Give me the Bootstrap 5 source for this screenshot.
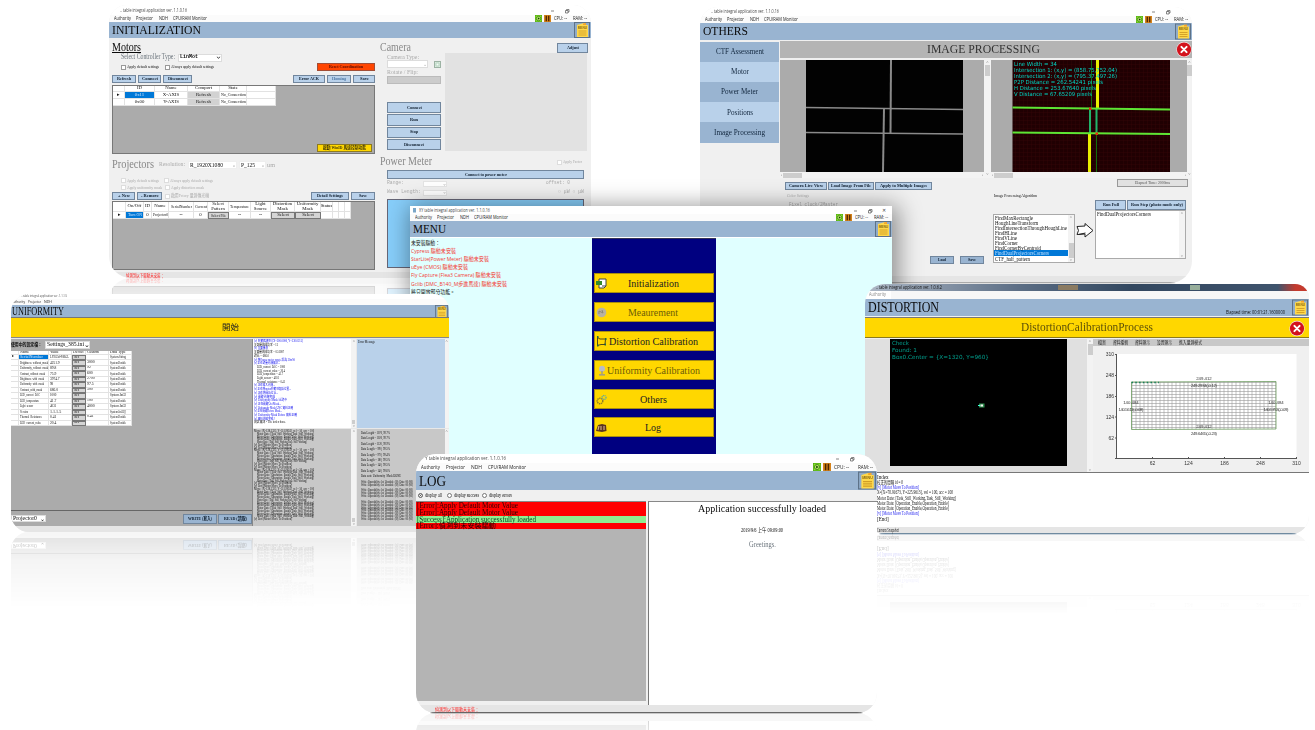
<!DOCTYPE html>
<html lang="zh-Hant">
<head>
<meta charset="utf-8">
<title>XY table integral application</title>
<link rel="stylesheet" href="https://cdn.jsdelivr.net/npm/bootstrap@5.3.0/dist/css/bootstrap.min.css">
<style>
body{width:1315px;height:730px;overflow:hidden;background:#fff;position:relative;color:#0a0a0a;font:5px/1 "Liberation Serif","Noto Sans CJK TC",serif}
.desk{width:1315px;height:730px;position:relative;overflow:hidden}
.win{position:absolute;overflow:hidden;display:flex;flex-direction:column;background:#f0f0f0;
 -webkit-box-reflect:below 0 linear-gradient(transparent 68%,rgba(0,0,0,.12) 88%,rgba(0,0,0,.36))}
.w-init{left:109px;top:5px;width:482px;height:273px;border-radius:18px 18px 0 22px}
.w-oth{left:700px;top:7px;width:492px;height:276px;border-radius:18px 18px 22px 0}
.w-menu{left:410px;top:206px;width:482px;height:272px;box-shadow:3px 3px 22px 3px rgba(0,0,0,.42);-webkit-box-reflect:unset}
.w-uni{left:11px;top:294px;width:438px;height:238px;border-radius:18px 16px 0 18px}
.w-dis{left:865px;top:284px;width:444px;height:250px;border-radius:20px 14px 18px 20px}
.w-log{left:416px;top:454px;width:461px;height:259px;border-radius:20px}
.f{display:flex;align-items:center;white-space:nowrap}
.g{display:grid;white-space:nowrap}
.fit{display:inline-block;white-space:nowrap;line-height:1.1}
.fit>span{display:inline-block;transform-origin:0 50%}
u.fit{text-decoration:none}u.fit>span{text-decoration:underline;text-decoration-thickness:1px}
.ui{font-family:"Open Sans","Noto Sans CJK TC",sans-serif}
.mono{font:5px "Liberation Mono",monospace}
.ttl{height:10px;background:#fff;padding:2px 21px 0 11px;font-size:5.4px;color:#444;flex:none}
.mnu{height:7px;background:#fbfbfb;padding:0 4px 0 4.5px;font-size:5px;color:#222;flex:none}
.hd{height:16px;background:#99b4d1;padding:0 1px 0 3px;font-size:13.5px;color:#0a0a0a;flex:none;justify-content:space-between}
.hd svg{height:100%;width:16px;flex:none}
.s1{margin-left:1px}.s2{margin-left:2px}.s3{margin-left:3px}.s5{margin-left:5px}.s6{margin-left:6px}.s9{margin-left:9px}.s19{margin-left:19px}
.e6{margin-right:6px}.e14{margin-right:14px}
.z5{font-size:5px}.z6{font-size:6px}.z65{font-size:6.5px}.z7{font-size:7px}.z75{font-size:7.5px}.z12{font-size:12px}
.w-oth .ttl{height:9px;padding-top:1px}.w-oth .hd{height:17px}
.w-menu .ttl{height:8px;padding:1px 6px 0 3px}.w-menu .mnu{height:7px}.w-menu .clx{margin-left:9px}
.w-log .ttl{height:9px;padding:0 22px 0 9px;font-size:6px}.w-log .mnu{height:8px;font-size:6px;padding-left:5px}.w-log .hd{height:19px;font-size:15.5px}
.w-log .hd svg{width:18px}
.b{display:flex;align-items:center;justify-content:center;background:#b9d1ea;border:1px solid #71869d;font-weight:bold;font-size:5px;color:#0d1c2c;white-space:nowrap;line-height:1}
.b.red{background:#ff4500;color:#5a0b00;border-color:#a34d35;width:58px;height:8px}
.b.yel{background:#ffd700;border-color:#8d7a20;color:#40360a;width:55px;height:8px;margin:0 2px 1px}
.b.gr{background:#e1e1e1;border-color:#999;color:#555;font-weight:normal;margin:1px 0 3px}
.b.off{color:#4d77a5}
.b.adj{width:31px;height:10px}.b.ls{width:24px;height:8px;background:#99b4d1}.b.rw{width:34px;height:10px;background:#99b4d1}
.ck{width:5px;height:5px;border:1px solid #999;background:#fff;flex:none;margin-right:1px}
.ck.dim{border-color:#ddd}
.dim{color:#aaa}.mid{color:#888}
.box{background:#fff;border:1px solid #dcdcdc;padding-left:1px;display:flex;align-items:center;justify-content:space-between;line-height:1;white-space:nowrap;height:8px}
.box.lin{width:44px;font:bold 5.5px "Liberation Mono",monospace}
.box.res{width:49px;font-size:6.5px;border-color:#eee}.box.pp{width:27px;font-size:6.5px;border-color:#eee}
.box.cb{width:41px;justify-content:end}.box.rg{width:24px;height:6px;border-color:#e4e4e4;justify-content:end}
.box.set{width:45px;font:7px "Liberation Serif",serif}.box.prj{width:35px;height:7px;font-size:6px}
.gridbox{background:#ababab;border:1px solid #777}
.dt{display:grid;font-size:4.8px;line-height:1;color:#111}
.dt>*{background:#fff;border-right:1px solid #e2e2e2;border-bottom:1px solid #e2e2e2;display:flex;align-items:center;justify-content:center;white-space:nowrap;overflow:hidden}
.dt>.sel{background:#0078d7;color:#cfe6ff}.dt>.btc{background:#d2d2d2}.dt>.bd{background:#d5d5d5;border:1px solid #777}
.st{height:7px;background:#e5e5e5;border-bottom:1px solid #666;color:#f22;font-size:4.8px;flex:none;font-family:"Noto Sans CJK TC",sans-serif;padding-left:17px}
/* initialization */
.ini{flex:1;display:grid;grid-template-columns:263px 208px;column-gap:5px;padding-left:3px}
.inl{display:grid;grid-template-rows:4px 11px 9px 10px 3px 8px 2px 69px 5px 12px 6px 7px 7px 1px 8px 1px 69px 2px;align-content:start}
.inl>.bt1{grid-template-columns:24px 23px 29px 1fr 32px 24px 22px;column-gap:2px}
.inl>.bt2{grid-template-columns:23px 25px 48px 1fr 38px 24px;column-gap:2px}
.inr{display:grid;grid-template-rows:5px 10px 98px 5px 12px 2px 9px 1px 8px 9px 2px 69px}
.inr>.pad{margin:0 4px 0 7px}
.inr>.sky{background:#87cefa;border:1px solid #667}
.cam{display:grid;grid-template-columns:54px 142px;column-gap:4px;padding-left:7px}
.view{background:#e2e2e2}
.camc{display:grid;grid-template-rows:7px 8px 8px 8px 18px repeat(4,12.25px);align-content:start}
.camc .b{margin-bottom:1px}
.flip{background:#ccc;border:1px solid #bbb}
.t1{grid-template-columns:12px 30px 33px 32px 27px 29px;grid-template-rows:6px 7px 7px;width:163px}
.t2{grid-template-columns:13px 18px 8px 17px 25px 14px 21px 22px 20px 24px 26px 12px 6px 6px 6px;grid-template-rows:10px 7px}
.t2>*{text-align:center;white-space:normal}
/* others */
.oth{flex:1;display:grid;grid-template-columns:79px 1fr;padding-top:1px;column-gap:1px}
.side{padding-top:.6px}
.side>div{height:20.2px;display:flex;align-items:center;justify-content:center;background:#99b4d1;font-size:7.5px;color:#10253c;padding-top:1px}
.side>div:nth-child(even){background:#b9d1ea}
.ip{height:17px;background:#b4b4b4;font-size:13px;color:#333;justify-content:center;position:relative;padding-right:6px}
.closer{position:absolute;right:0;top:0;width:16px;height:17px}
.imgs{display:grid;grid-template-columns:204px 7px 196px 5px;grid-template-rows:112px 6px;margin-top:2px}
.imgs>.pn{background:#ababab}
.sb{background:#f3f3f3;display:flex;flex-direction:column;align-items:center;justify-content:space-between;font-size:4px;color:#555;line-height:1}
.sb.h{flex-direction:row;padding:0 1px}
.sb u{background:#cdcdcd;width:5px;height:11px;margin-bottom:auto;margin-top:1px}.sb.h u{width:19px;height:5px;margin:0 auto 0 1px}
.sb u.low{margin:auto 0 0;height:4px;width:3px}.sb u.lowb{margin:auto 0 0;height:15px}
.obt{grid-template-columns:42px 46px 57px 1fr 71px;column-gap:1px;padding:0 4px 0 5px;height:12px}
.obt>.lo{margin-top:4px}
.alg{display:grid;grid-template-columns:204px 87px 20px 91px;height:81px;padding-left:4px}
.alg>.p3{padding-top:3px}.alg>.p10{padding-top:10px}
.alg .clk{margin-top:3px;font-size:5.5px}
.alg .lsv{gap:6px;margin-bottom:7px;padding-right:4px}
.runs{grid-template-columns:31px 59px;column-gap:1px;height:10px}
.lst{background:#fff;border:1px solid #aaa;height:49px;font-size:5.8px;color:#111;display:grid;grid-template-columns:1fr 6px;white-space:nowrap}
.lst.a{margin:15px 0 0 5px}
.lst div>div{height:5.15px;line-height:5.2px;padding-left:1px}
.lst .hl{background:#0078d7;color:#bfe0ff}
.st.pale{border-color:#aaa}
/* menu */
.mb{flex:1;background:#e0ffff;display:grid;grid-template-columns:182px 124px 1fr;border-top:1px solid #fff}
.mtx{font-size:5.9px;color:#f33a32;padding:1px 0 0 1px}
.mtx>div{height:8.15px;display:flex;align-items:center}
.mtx>.blk{color:#222}
.nav6{background:#000080;padding:34.4px 2px 0;display:grid;grid-template-rows:repeat(6,20px);row-gap:8.8px;border-top:1px solid #335;align-content:start}
.nav6>div{background:#ffd700;border:1px solid #a88f10;display:flex;align-items:center;justify-content:center;position:relative;font-size:11px;color:#222;padding-right:2px}
.nav6>div.no{color:#6d5d08}
.nav6 svg{position:absolute;left:1px;top:4px;width:11px;height:11px}
/* uniformity */
.w-uni .ttl{height:5px;padding:0 0 0 10px;font-size:4px}.w-uni .mnu{height:6px;font-size:4px;padding-left:0}.w-uni .hd{height:13px;padding-left:0;font-size:11.5px}
.w-uni .hd svg{width:13px}
.go{height:21px;background:#ffd700;border-top:1px solid #777;border-bottom:1px solid #888;font-size:8.5px;justify-content:center;color:#222;margin-top:-1px;flex:none}
.ub{flex:1;display:grid;grid-template-columns:242px 98px 5px 88px 4px;grid-template-rows:89px 1px 97px;padding-top:1px;background:#e8e8e8;column-gap:.2px}
.ul{grid-row:1/4;background:#ababab;border-right:1px solid #888;display:grid;grid-template-rows:12px 160px 15px}
.ul>.tw{border-bottom:1px solid #666}
.t3{grid-template-columns:8px 30px 23px 14px 23px 23px;grid-template-rows:4px repeat(13,5.48px);font-size:3.8px;width:121px}
.t3>*{justify-content:start;padding-left:1px}
.lg{font-size:3.9px;color:#111;overflow:hidden;padding:0 1px;white-space:nowrap}
.lg>div{height:3.71px;line-height:3.8px;padding-left:3px}
.lg .u,.lg .n{color:#11e;padding-left:0}.lg .n{color:#111}
.lg.er{background:#b9d1ea;padding-top:1px}
.gap4{grid-column:2/6}
.lg.k{background:#c8c8c8}.lg.k>div{height:2.75px;line-height:2.8px}
.lg.k.r{padding-top:2px}
.lg.r>div{height:5.4px;line-height:5.4px}
.lg.r>.q{height:2.87px;line-height:2.9px}
.st.fl{border:0;height:6px}
/* distortion */
.aero{height:7px;background:linear-gradient(90deg,#aeb9c7,#5b6d84 35%,#32475f 60%,#3f546d 93%,#c43a2e 97%);padding:0 0 0 11px;color:#111;font-size:5px;flex:none}
.aero .a1{width:20px;height:5px;background:#8b7b62;margin-right:112px}.aero .a2{width:10px;height:5px;background:#97ae9b;margin-right:109px}
.dmn{height:8px;background:linear-gradient(90deg,#fff 26px,#f7f7f7 26px);padding-left:4px;flex:none;font-size:4.8px;color:#8a8a8a}
.w-dis .hd{height:17px;font-size:14px}
.w-dis .el{font-size:5px;margin:0 7px 1px 0}
.pr{height:21px;background:#ffd700;border-top:1px solid #777;border-bottom:1px solid #8a7a20;margin-top:1px;color:#5d5008;font-size:12.5px;position:relative;flex:none;justify-content:center}
.pr .closer{right:4px;top:2px}
.db{height:135px;display:grid;grid-template-columns:222px 6px 1fr;border-bottom:1px solid #777;padding-top:1px;flex:none}
.dl{background:#e0e0e0;display:grid;grid-template-columns:177px;grid-template-rows:127px;padding-left:25px}
.cam2{background:#000;color:#00a08e;font:5.6px/6.8px "DejaVu Sans",sans-serif;padding:1px 2px;position:relative}
.cam2 svg{position:absolute;left:88px;top:64px;width:7px;height:5px}
.tb{height:7px;background:#c8c8c8;font-size:4.8px;padding-left:5px;color:#222;gap:7px}
.dtx{height:54px;background:#fff;font-size:5.1px;padding:1.5px 0 0 12px;flex:none;color:#111;white-space:nowrap}
.dtx>div{height:5.25px}.dtx .u{color:#22e}
.st.snap{border-color:#6f8aa0;padding-left:12px;color:#222}
/* log */
.rad{height:11px;padding:0 2px;font-size:5.2px;flex:none}
.ra{width:5px;height:5px;border:1px solid #777;border-radius:50%;background:#fff;margin-right:2px;flex:none}.ra.on{background:#222;box-shadow:inset 0 0 0 1px #fff}
.lb{flex:1;display:grid;grid-template-columns:230px 2px 1fr}
.ll{background:#b4b4b4;border-top:1px solid #888;font-size:7.4px;margin-bottom:4px}
.ll>div{height:6.85px;background:#f00;padding:1px 0 0 1px;display:flex;align-items:center;color:#2b0000}
.ll>.ok{background:#90ee90;color:#042}
.lr{background:#fff;border-left:1px solid #777;border-top:1px solid #888;display:flex;flex-direction:column;align-items:center;padding-right:2px}
.lr .l1{font-size:10.5px;margin-top:1px}.lr .l2{margin-top:13px;font-size:5.2px}.lr .l3{margin-top:8px;font-size:7.5px}
.st.big{padding-left:19px;height:8px}
</style>
</head>
<body>
<svg class="d-none">
 <symbol id="menu" viewBox="0 0 16 16"><rect width="16" height="16" fill="#5d7288"/><rect x="1" y="1" width="14" height="14" fill="#90abc8"/><path d="M3 3 10 1l2 2H14V15H3Z" fill="#ffd84a"/><path d="M9 1.500 12 1v2H9Z" fill="#f5a52c"/><text x="8.400" y="6.600" font-size="3.200" font-weight="bold" text-anchor="middle" font-family="Liberation Sans" fill="#8b6a10">MENU</text><path d="M4.500 9h8M4.500 11h8M4.500 13h8" stroke="#d09d26" stroke-width=".9"/></symbol>
 <symbol id="play" viewBox="0 0 8 8"><rect width="8" height="8" fill="#4aa012"/><rect x=".6" y=".6" width="6.800" height="6.800" fill="#8ae62a"/><circle cx="4" cy="4" r="2.500" fill="#c8f970" stroke="#1c5a06" stroke-width=".7"/><path d="M3.200 2.500 5.600 4 3.200 5.500Z" fill="#123d04"/></symbol>
 <symbol id="pause" viewBox="0 0 8 8"><rect width="8" height="8" fill="#d5821a"/><path d="M2.600.8v6.400M5.400.8v6.400" stroke="#4a2503" stroke-width="1.500"/></symbol>
 <symbol id="winbtn" viewBox="0 0 20 6"><path d="M1 3h3" stroke="#666" stroke-width=".8"/><path d="M15.500 2.500h2.500v2.500h-2.500zM16.500 2.500v-1h2.500v2.500h-1" fill="none" stroke="#555" stroke-width=".7"/></symbol>
 <symbol id="x" viewBox="0 0 16 17"><circle cx="8" cy="8.500" r="7.700" fill="#f3e3e3"/><circle cx="8" cy="8.500" r="7.100" fill="#d3121c"/><path d="M5.400 5.900l5.200 5.200M10.600 5.900l-5.200 5.200" stroke="#fff" stroke-width="2" stroke-linecap="round"/></symbol>
</svg>
<main class="desk">

<section class="win w-init">
 <div class="f ttl ui"><span class="fit" data-w="67">.. table integral application ver. 1.1.0.16</span><svg class="ms-auto" width="20" height="6"><use href="#winbtn"/></svg></div>
 <div class="f mnu ui"><span class="fit" data-w="17">Authority</span><span class="fit s5" data-w="17">Projector</span><span class="fit s6" data-w="9">NDH</span><span class="fit s5" data-w="34">CPU/RAM Monitor</span><svg class="ms-auto" width="7" height="7"><use href="#play"/></svg><svg class="s2" width="7" height="7"><use href="#pause"/></svg><span class="fit s3" data-w="13">CPU: --</span><span class="fit s6" data-w="14">RAM: --</span></div>
 <div class="f hd"><span class="fit" data-w="89">INITIALIZATION</span><svg><use href="#menu"/></svg></div>
 <div class="ini">
  <div class="inl">
   <i></i>
   <div class="f z12"><u class="fit" data-w="29">Motors</u></div>
   <div class="f z75"><span class="fit s9 text-secondary" data-w="54">Select Controller Type:</span><span class="box lin s3"><span class="fit" data-w="18">LinMot</span><span class="fit" data-w="5">⌄</span></span></div>
   <div class="f"><i class="ck s9"></i><span class="fit" data-w="32">Apply default settings</span><i class="ck s6"></i><span class="fit" data-w="43">Always apply default settings</span><span class="b red ms-auto"><span class="fit" data-w="34">Reset Coordination</span></span></div>
   <i></i>
   <div class="g bt1"><span class="b"><span class="fit" data-w="14">Refresh</span></span><span class="b"><span class="fit" data-w="16">Connect</span></span><span class="b"><span class="fit" data-w="20">Disconnect</span></span><i></i><span class="b"><span class="fit" data-w="20">Error ACK</span></span><span class="b off"><span class="fit" data-w="14">Homing</span></span><span class="b"><span class="fit" data-w="9">Save</span></span></div>
   <i></i>
   <div class="gridbox d-flex flex-column justify-content-between"><div class="dt t1"><i></i><span>ID</span><span>Name</span><span>Comport</span><span>State</span><i></i><span>▸</span><span class="sel">0x11</span><span>X-AXIS</span><span class="btc">Refresh</span><span><span class="fit" data-w="25">No_Connection</span></span><i></i><i></i><span>0x00</span><span>Y-AXIS</span><span class="btc">Refresh</span><span><span class="fit" data-w="25">No_Connection</span></span><i></i></div><span class="b yel align-self-end"><span class="fit" data-w="43">啟動 WinID 馬達控制功能</span></span></div>
   <i></i>
   <div class="f z12"><span class="fit mid" data-w="42">Projectors</span><span class="fit s5 dim z7" data-w="26">Resolution:</span><span class="box res s3"><span class="fit" data-w="33">R_1920X1080</span><span class="fit dim" data-w="4">⌄</span></span><span class="box pp s2"><span class="fit" data-w="14">P_125</span><span class="fit dim" data-w="4">⌄</span></span><span class="fit s1 dim z6" data-w="8">um</span></div>
   <i></i>
   <div class="f dim"><i class="ck dim s9"></i><span class="fit" data-w="32">Apply default settings</span><i class="ck dim s5"></i><span class="fit" data-w="43">Always apply default settings</span></div>
   <div class="f dim"><i class="ck dim s9"></i><span class="fit" data-w="35">Apply uniformity mask</span><i class="ck dim s3"></i><span class="fit" data-w="33">Apply distortion mask</span></div>
   <i></i>
   <div class="g bt2"><span class="b"><span class="fit" data-w="12">+ New</span></span><span class="b"><span class="fit" data-w="18">- Remove</span></span><span class="f dim"><i class="ck dim s1"></i><span class="fit" data-w="38">啟用Fctory 量測傳光機</span></span><i></i><span class="b"><span class="fit" data-w="26">Detail Settings</span></span><span class="b"><span class="fit" data-w="8">Save</span></span></div>
   <i></i>
   <div class="gridbox"><div class="dt t2"><i></i><span>On/Off</span><span>ID</span><span>Name</span><span><span class="fit" data-w="21">SerialNumber</span></span><span><span class="fit" data-w="12">Current</span></span><span>Select<br>Pattern</span><span><span class="fit" data-w="19">Temperature</span></span><span>Light<br>Source</span><span>Distortion<br>Mask</span><span>Uniformity<br>Mask</span><span>Status</span><i></i><i></i><i></i><span>▸</span><span class="sel"><span class="fit" data-w="14">Turn ON</span></span><span>0</span><span><span class="fit" data-w="15">Projector0</span></span><span>--</span><span>0</span><span class="bd"><span class="fit" data-w="15">Select File</span></span><span>--</span><span>--</span><span class="bd">Select</span><span class="bd">Select</span><i></i><i></i><i></i><i></i></div></div>
  </div>
  <div class="inr">
   <i></i>
   <div class="f mid z12"><span class="fit" data-w="31">Camera</span><span class="b adj ms-auto"><span class="fit" data-w="12">Adjust</span></span></div>
   <div class="cam"><div class="camc"><span class="dim z65"><span class="fit" data-w="32">Camera Type:</span></span><div class="f dim"><span class="box cb">⌄</span><svg class="s6" width="7" height="7"><rect x=".5" y=".5" width="6" height="6" fill="#dcebe0" stroke="#9db3a4"/><path d="M2 5V2h3V5Z" stroke="#b6d5c0" fill="#f4faf6"/></svg></div><span class="dim z65"><span class="fit" data-w="31">Rotate / Flip:</span></span><span class="flip"></span><i></i><span class="b"><span class="fit" data-w="15">Connect</span></span><span class="b"><span class="fit" data-w="8">Run</span></span><span class="b"><span class="fit" data-w="8">Stop</span></span><span class="b"><span class="fit" data-w="20">Disconnect</span></span></div><div class="view"></div></div>
   <i></i>
   <div class="f mid z12"><span class="fit" data-w="52">Power Meter</span><i class="ck dim ms-auto"></i><span class="fit dim z5 e6" data-w="19">Apply Factor</span></div>
   <i></i>
   <span class="b pad"><span class="fit" data-w="42">Connect to power meter</span></span>
   <i></i>
   <div class="f mono dim pad"><span class="fit" data-w="17">Range:</span><span class="box rg s19">⌄</span><span class="fit ms-auto e14" data-w="24">offset: 0</span></div>
   <div class="f mono dim pad"><span class="fit" data-w="34">Wave Length:</span><span class="box rg s2">⌄</span><span class="fit ms-auto" data-w="26">○ μW ○ μW</span></div>
   <i></i>
   <div class="sky pad"></div>
  </div>
 </div>
 <div class="f st"><span class="fit" data-w="38">偵測到以下驅動未安裝：</span></div>
</section>

<section class="win w-oth">
 <div class="f ttl ui"><span class="fit" data-w="68">.. table integral application ver. 1.1.0.16</span><svg class="ms-auto" width="20" height="6"><use href="#winbtn"/></svg></div>
 <div class="f mnu ui"><span class="fit" data-w="17">Authority</span><span class="fit s5" data-w="17">Projector</span><span class="fit s6" data-w="9">NDH</span><span class="fit s5" data-w="34">CPU/RAM Monitor</span><svg class="ms-auto" width="7" height="7"><use href="#play"/></svg><svg class="s2" width="7" height="7"><use href="#pause"/></svg><span class="fit s3" data-w="13">CPU: --</span><span class="fit s6" data-w="14">RAM: --</span></div>
 <div class="f hd"><span class="fit" data-w="45">OTHERS</span><svg><use href="#menu"/></svg></div>
 <div class="oth">
  <div class="side"><div><span class="fit" data-w="48">CTF Assessment</span></div><div><span class="fit" data-w="18">Motor</span></div><div><span class="fit" data-w="37">Power Meter</span></div><div><span class="fit" data-w="26">Positions</span></div><div><span class="fit" data-w="51">Image Processing</span></div></div>
  <div>
   <div class="f ip"><span class="fit" data-w="113">IMAGE PROCESSING</span><svg class="closer"><use href="#x"/></svg></div>
   <div class="imgs">
    <div class="pn"><svg width="204" height="112"><rect x="26" width="157" height="112" fill="#020202"/><g stroke="#8a8a8a" stroke-width="1.600"><path d="M26 47.500 183 49.500M26 72.500 183 74"/><path d="M111 0 110.500 74" stroke-width="2"/><path d="M104 48 103 112" stroke-width="2"/></g></svg></div>
    <div class="sb"><span>˄</span><u></u></div>
    <div class="pn"><svg width="196" height="112"><defs><pattern id="mesh" width="4" height="4" patternUnits="userSpaceOnUse"><rect width="4" height="4" fill="#200002"/><path d="M0 0H4M0 0V4" stroke="#350507" stroke-width=".8"/></pattern></defs><rect x="21.500" width="157.500" height="112" fill="url(#mesh)"/><path d="M100.500 0V48M105.500 74V112" stroke="#126d0d"/><path d="M106.500 0V48M98.500 74V112" stroke="#e8f000" stroke-width="3"/><path d="M99 48V74M105.500 48V74" stroke="#21b46a" stroke-width="2"/><path d="M21.500 47.500 179 49.500M21.500 72.500 179 74" stroke="#5ee534" stroke-width="2"/><rect x="98" y="47.500" width="2.500" height="2.500" fill="#e52b0c"/><rect x="104.500" y="72.500" width="2.500" height="2.500" fill="#e52b0c"/><g font-family="DejaVu Sans" font-size="5.600" fill="#00d5c4"><text x="23" y="6" textLength="43" lengthAdjust="spacingAndGlyphs">Line Width = 34</text><text x="23" y="12" textLength="103" lengthAdjust="spacingAndGlyphs">Intersection 1: (x,y) = (858.75,752.04)</text><text x="23" y="18" textLength="103" lengthAdjust="spacingAndGlyphs">Intersection 2: (x,y) = (795.37,497.26)</text><text x="23" y="24" textLength="89" lengthAdjust="spacingAndGlyphs">P2P Distance = 262.54241 pixels</text><text x="23" y="30" textLength="82" lengthAdjust="spacingAndGlyphs">H Distance = 253.67640 pixels</text><text x="23" y="36" textLength="78" lengthAdjust="spacingAndGlyphs">V Distance = 67.65209 pixels</text></g></svg></div>
    <div class="sb"><span>˄</span><u></u></div>
    <div class="sb h"><span>‹</span><u></u><span>›</span></div><div class="sb"><span>˅</span></div><div class="sb h"><span>‹</span><u></u><span>›</span></div><div class="sb"><span>˅</span></div>
   </div>
   <div class="g obt"><span class="b lo"><span class="fit" data-w="34">Camera Live View</span></span><span class="b lo"><span class="fit" data-w="40">Load Image From File</span></span><span class="b lo"><span class="fit" data-w="47">Apply to Multiple Images</span></span><i></i><span class="b gr"><span class="fit" data-w="35">Elapsed Time: 2000ms</span></span></div>
   <div class="alg">
    <div class="d-flex flex-column p3"><div class="f dim s3"><span class="fit" data-w="22">Color Settings</span></div><div class="f dim s5 mono clk"><span class="fit" data-w="49">Fixel clock/2Master</span></div><div class="f mt-auto justify-content-end lsv"><span class="b ls"><span class="fit" data-w="8">Load</span></span><span class="b ls"><span class="fit" data-w="8">Save</span></span></div></div>
    <div class="p3"><span class="fit s6" data-w="43">Image Processing Algorithm</span><div class="lst a"><div><div><span class="fit" data-w="38">FindMaxRectangle</span></div><div><span class="fit" data-w="43">HoughLineTransform</span></div><div><span class="fit" data-w="72">FindIntersectionThroughHoughLine</span></div><div><span class="fit" data-w="22">FindHLine</span></div><div><span class="fit" data-w="22">FindVLine</span></div><div><span class="fit" data-w="23">FindCorner</span></div><div><span class="fit" data-w="46">FindCornerByCentroid</span></div><div class="hl"><span class="fit" data-w="54">FindDualProjectorsCorners</span></div><div><span class="fit" data-w="35">CTF_half_pattern</span></div></div><div class="sb"><span>˄</span><u class="lowb"></u><span>˅</span></div></div></div>
    <svg width="20" height="81"><path d="M2 36.500 10 36V33.500l8 7-8 6.500V44l-8 .5 1.500-4Z" fill="#fff" stroke="#222"/><path d="M3.500 44.500l7-1.500" stroke="#222"/></svg>
    <div class="p10"><div class="g runs"><span class="b"><span class="fit" data-w="16">Run Full</span></span><span class="b"><span class="fit" data-w="52">Run Step (photo mode only)</span></span></div><div class="lst"><div><div><span class="fit" data-w="54">FindDualProjectorsCorners</span></div></div><div class="sb"><span>˄</span><span>˅</span></div></div></div>
   </div>
  </div>
 </div>
 <div class="st pale"></div>
</section>

<section class="win w-menu">
 <div class="f ttl ui"><svg width="3" height="5"><rect width="3" height="4.500" fill="#7aa6c8"/></svg><span class="fit s3" data-w="71">XY table integral application ver. 1.1.0.16</span><svg class="ms-auto" width="20" height="6"><use href="#winbtn"/></svg><span class="clx">✕</span></div>
 <div class="f mnu ui"><span class="fit" data-w="17">Authority</span><span class="fit s5" data-w="17">Projector</span><span class="fit s6" data-w="9">NDH</span><span class="fit s5" data-w="34">CPU/RAM Monitor</span><svg class="ms-auto" width="7" height="7"><use href="#play"/></svg><svg class="s2" width="7" height="7"><use href="#pause"/></svg><span class="fit s3" data-w="13">CPU: --</span><span class="fit s6" data-w="14">RAM: --</span></div>
 <div class="f hd"><span class="fit" data-w="33">MENU</span><svg><use href="#menu"/></svg></div>
 <div class="mb">
  <div class="mtx ui"><div class="blk"><span class="fit" data-w="29">未安裝驅動：</span></div><div><span class="fit" data-w="45">Cypress 驅動未安裝</span></div><div><span class="fit" data-w="78">StarLite(Power Meter) 驅動未安裝</span></div><div><span class="fit" data-w="57">uEye (CMOS) 驅動未安裝</span></div><div><span class="fit" data-w="90">Fly Capture (Flea3 Camera) 驅動未安裝</span></div><div><span class="fit" data-w="96">Gclib (DMC_B140_M步進馬達) 驅動未安裝</span></div><div class="blk"><span class="fit" data-w="44">將只開放部分功能。</span></div></div>
  <div class="nav6">
   <div><svg viewBox="0 0 11 11"><path d="M3 1h7v7l-2 2H3Z" fill="#fff" stroke="#444"/><path d="M0 3h6v4H0Z" fill="#348a2c"/><path d="M6 8h4" stroke="#444"/></svg><span class="fit" data-w="51">Initialization</span></div>
   <div class="no"><svg viewBox="0 0 11 11"><circle cx="5.500" cy="5.500" r="4.800" fill="#b8b2a0"/><path d="M3 7V4l4 2-1-3" stroke="#8b8778" fill="none"/></svg><span class="fit" data-w="50">Meaurement</span></div>
   <div><svg viewBox="0 0 11 11"><path d="M1.500 1.500 4 3l5.500 0-.5 5.500-4 0-3.500 1Z" fill="none" stroke="#222" stroke-width=".8"/><path d="M1 1h1.500M9 3h1.500M8.500 8.500h1.500M1 9.500h1.500" stroke="#264" stroke-width="1.800"/></svg><span class="fit" data-w="89">Distortion Calibration</span></div>
   <div class="no"><svg viewBox="0 0 11 11"><circle cx="6" cy="3.800" r="3" fill="#b8bcc8"/><path d="M6 6v3M3 9.800h6" stroke="#8a8fa2" stroke-width="1.200"/></svg><span class="fit" data-w="93">Uniformity Calibration</span></div>
   <div><svg viewBox="0 0 11 11" fill="none"><circle cx="4" cy="7" r="2.800" stroke="#8c7a2a" stroke-width="1.400" stroke-dasharray="1.400 .6"/><circle cx="8" cy="3.500" r="2" stroke="#67a89a" stroke-width="1.300" stroke-dasharray="1 .5"/></svg><span class="fit" data-w="27">Others</span></div>
   <div><svg viewBox="0 0 11 11"><path d="M0 9 2 3l4-1 4 1 .5 6L6 10Z" fill="#5b3420"/><path d="M2 8l1-4M5 8V4M8 8V4" stroke="#d8b48a" stroke-width="1.100"/></svg><span class="fit" data-w="16">Log</span></div>
  </div>
 </div>
</section>

<section class="win w-uni">
 <div class="f ttl ui"><span class="fit" data-w="46">.. table integral application ver. 1.1.1.5</span></div>
 <div class="f mnu ui"><span class="fit" data-w="14">Authority</span><span class="fit s3" data-w="13">Projector</span><span class="fit s3" data-w="8">NDH</span></div>
 <div class="f hd"><span class="fit s1" data-w="52">UNIFORMITY</span><svg><use href="#menu"/></svg></div>
 <div class="f go"><span class="fit" data-w="17">開始</span></div>
 <div class="ub">
  <div class="ul">
   <div class="f ui fw-bold"><span class="fit" data-w="31">使用中的設定檔：</span><span class="box set s3"><span class="fit" data-w="37">Settings_385.ini</span><span>⌄</span></span></div>
   <div class="tw"><div class="dt t3" id="params"></div></div>
   <div class="f"><span class="box prj"><span class="fit" data-w="24">Projector0</span><span>⌄</span></span><span class="b rw ms-auto"><span class="fit" data-w="24">WRITE (寫入)</span></span><span class="b rw s1"><span class="fit" data-w="23">READ (讀取)</span></span></div>
  </div>
  <div class="lg bg-white" id="msgs"></div><div class="sb"><span>˄</span><u class="low"></u><span>˅</span></div>
  <div class="lg er"><span class="fit" data-w="17">Error Message</span></div><div class="sb"><span>˄</span></div>
  <i class="gap4"></i>
  <div class="lg k" id="trace"></div><div class="sb"><span>˄</span><u class="low"></u><span>˅</span></div>
  <div class="lg k r" id="meter"></div><div class="sb"><span>˄</span></div>
 </div>
 <div class="st fl"></div>
</section>

<section class="win w-dis">
 <div class="f aero ui"><span class="fit" data-w="66">.. table integral application ver. 1.0.6.2</span><span class="a1 ms-auto"></span><span class="a2"></span></div>
 <div class="f dmn ui"><span class="fit" data-w="17">Authority</span></div>
 <div class="f hd"><span class="fit" data-w="71">DISTORTION</span><span class="fit ui el ms-auto align-self-end" data-w="59">Elapsed time: 00:01:21.1600000</span><svg><use href="#menu"/></svg></div>
 <div class="f pr"><span class="fit" data-w="132">DistortionCalibrationProcess</span><svg class="closer"><use href="#x"/></svg></div>
 <div class="db">
  <div class="dl"><div class="cam2"><span class="fit" data-w="17">Check</span><br><span class="fit" data-w="25">Found: 1</span><br><span class="fit" data-w="97">Box0.Center = {X=1320, Y=960}</span><svg><rect x="1" y=".5" width="5.500" height="4" fill="#2f9150"/><rect x="2.500" y="1.500" width="2.500" height="2" fill="#f4eeee"/><path d="M0 2.500h2" stroke="#4fd"/></svg></div></div>
  <div class="sb"><span>˄</span><u></u><span>˅</span></div>
  <div><div class="f tb ui"><span class="fit" data-w="8">檔案</span><span class="fit" data-w="15">資料編輯</span><span class="fit" data-w="15">資料顯示</span><span class="fit" data-w="15">設置顯示</span><span class="fit" data-w="23">進入量測模式</span></div>
   <svg width="216" height="126" font-family="Liberation Sans" font-size="5" fill="#333"><defs><pattern id="cells" x="38.500" y="36" width="4" height="3" patternUnits="userSpaceOnUse"><path d="M0 .5H4M.5 0V3" stroke="#999" stroke-width=".6"/></pattern></defs><rect x="23.500" y="8" width="180" height="104" fill="#fff"/><path d="M23.500 8V113M22 112.500H203.500M22 8.500h2M22 29.500h2M22 50.500h2M22 71h2M22 92h2M59.500 111v2M95.500 111v2M131.500 111v2M167.500 111v2M203.500 111v2" stroke="#555" fill="none"/><path d="M38.500 36 183 35.500V83L38.500 83.500Z" fill="url(#cells)" stroke="#6a9a5c" stroke-width=".8"/><path d="M38.500 36.500H66" stroke="#17805a" stroke-width="1.500" stroke-dasharray="1.500 2.300"/><g text-anchor="end"><text x="21" y="10">310</text><text x="21" y="31">248</text><text x="21" y="52">186</text><text x="21" y="73">124</text><text x="21" y="94">62</text></g><g text-anchor="middle"><text x="59.500" y="119">62</text><text x="95.500" y="119">124</text><text x="131.500" y="119">186</text><text x="167.500" y="119">248</text><text x="203.500" y="119">310</text></g><g font-size="4.300" text-anchor="middle"><text x="111" y="34">249.412</text><text x="111" y="41" textLength="26">249.2934(-0.12)</text><text x="111" y="82">249.412</text><text x="111" y="88.500" textLength="26">249.6465(-0.23)</text><text x="38" y="58">140.484</text><text x="38" y="64.500" textLength="25">140.5611(-0.08)</text><text x="183" y="57.500">140.484</text><text x="183" y="64.500" textLength="25">140.5753(-0.09)</text></g></svg></div>
 </div>
 <div class="dtx"><div>Index</div><div><span class="fit" data-w="26">校正的間隔 id = 0</span></div><div class="u"><span class="fit" data-w="42">[v] [Motor Move To Position]</span></div><div><span class="fit" data-w="76">X=[X=70.91673, Y=225.9613], vel = 100, acc = 100</span></div><div><span class="fit" data-w="79">Motor Date: [Task_Still_Working,Task_Still_Working]</span></div><div><span class="fit" data-w="72">Motor Date: [Operation_Enable,Operation_Enable]</span></div><div><span class="fit" data-w="72">Motor Date: [Operation_Enable,Operation_Enable]</span></div><div class="u"><span class="fit" data-w="42">[v] [Motor Move To Position]</span></div><div>[End]</div></div>
 <div class="f st ui snap"><span class="fit" data-w="22">Camera Snapshot</span></div>
</section>

<section class="win w-log">
 <div class="f ttl ui"><span class="fit" data-w="81">Y table integral application ver. 1.1.0.16</span><svg class="ms-auto" width="20" height="6"><use href="#winbtn"/></svg></div>
 <div class="f mnu ui"><span class="fit" data-w="19">Authority</span><span class="fit s6" data-w="19">Projector</span><span class="fit s6" data-w="11">NDH</span><span class="fit s6" data-w="38">CPU/RAM Monitor</span><svg class="ms-auto" width="8" height="8"><use href="#play"/></svg><svg class="s2" width="8" height="8"><use href="#pause"/></svg><span class="fit s3" data-w="15">CPU: --</span><span class="fit s9" data-w="15">RAM: --</span></div>
 <div class="f hd"><span class="fit" data-w="27">LOG</span><svg><use href="#menu"/></svg></div>
 <div class="f rad"><i class="ra on"></i><span class="fit" data-w="17">display all</span><i class="ra s5"></i><span class="fit" data-w="25">display success</span><i class="ra s3"></i><span class="fit" data-w="23">display errors</span></div>
 <div class="lb">
  <div class="ll"><div><span class="fit" data-w="101">[Error]:Apply Default Motor Value</span></div><div><span class="fit" data-w="101">[Error]:Apply Default Motor Value</span></div><div class="ok"><span class="fit" data-w="119">[Success]:Application successfully loaded</span></div><div><span class="fit" data-w="79">[Error]:偵測到未安裝驅動</span></div></div><i></i>
  <div class="lr"><span class="fit l1" data-w="128">Application successfully loaded</span><span class="fit l2" data-w="42">2019/9/6 上午 09:09:00</span><span class="fit l3 text-secondary" data-w="27">Greetings.</span></div>
 </div>
 <div class="f st big"><span class="fit" data-w="44">偵測到以下驅動未安裝：</span></div>
</section>
</main>

<script src="https://cdn.jsdelivr.net/npm/bootstrap@5.3.0/dist/js/bootstrap.bundle.min.js"></script>
<script>
const el=(tag,cls,text,w)=>{const n=document.createElement(tag);n.className=cls;if(w){const s=document.createElement('span');s.className='fit';s.dataset.w=w;s.textContent=text;n.append(s)}else n.textContent=text;return n};
const params=document.getElementById('params');
['','Name','Value','DefSet','Custom','Data Type'].forEach(t=>params.append(el('span','',t)));
[['SerialNumber','LF9325d-90BGL','','System.String',23],['Brightness_without_mask','4251.9','3000','System.Double',28],['Uniformity_without_mask','89.8','92','System.Double',28],['Contrast_without_mask','75.9','600','System.Double',25],['Brightness_with_mask','3974.7','2700','System.Double',24],['Uniformity_with_mask','98','97.5','System.Double',24],['Contrast_with_mask','686.0','500','System.Double',22],['LED_current_DAC','1000','','System.Int32',20],['LED_temperature','41.7','100','System.Double',19],['Light_sensor','4031','4000','System.Int32',13],['Version','1.1.1.5','','System.Int32[]',8],['Thermal_Resistance','0.41','0.41','System.Double',22],['LED_current_value','20.4','','System.Double',21]].forEach((r,i)=>{
 params.append(el('span','',i?'':'▸'),el('span',i?'':'sel',r[0],r[4]),el('span','',r[1],Math.min(19,r[1].length*1.6)),el('span','bd','Set'),el('span','',r[2]),el('span','',r[3],16));
});
const put=(id,rows)=>rows.forEach(r=>document.getElementById(id).append(el('div',r[0],r[1],r[2])));
put('msgs',[['u','[v] 移動馬達到 [X=200.0000, Y=230.0215]',49],['n',' 全部優測成功率 = 12',24],['u','[v] 全面優測',14],['n',' 全面量測成功率 = 0.51087',30],['n','對比 = 686.0',15],['u','[v] 將Power meter range 設為 30mW',41],['u','[v] 正在對量光機資訊...',26],['','LED_current_DAC = 1000',28],['','LED_current_value = 20.4',28],['','LED_temperature = 41.7',26],['','Light_sensor = 4031',22],['','Thermal_resistance = 0.41',28],['u','[v] 正在寫入光機...',21],['u','[v] 正在將motor移動到起始位置...',37],['u','[v] 正在將開始位址...',24],['u','[v] 開啟光機完成',21],['u','[v] Uniformity Mask 比對中',33],['u','[v] 正在開啟Uni Mask...',27],['u','[v] Uniformity Mask UNC 資料正確',39],['u','[v] 正在開啟Before Mask...',28],['u','[v] Uniformity Mask Before 資料正確',43],['u','[v] 資料測驗完成！',22],['n','測試資訊 - The index done.',32]]);
const a=[];
[4,4,4,10].forEach((n,k)=>{a.push(['n','Move: [X=128.3323, Y=311.9852], vel = 50, acc = 100',60]);for(let i=0;i<n;i++)a.push(['',i%3?'Motor Date: [Operation_Enable,Task_Still_Working]':'Motor Date: [Task_Still_Working,Task_Still_Working]',i==3?50:57]);if(k<3)a.push(['n','[v] End [Motor Move To Position]',38]);a.push(['n','[v] End [Motor Move To Position]',38])});
put('trace',a);
const m=['1070, 99.7%','1020, 99.7%','1120, 99.9%','990, 99.5%','970, 99.4%','180, 99.5%','140, 99.5%','140, 99.6%'].map(t=>['','Data Length = '+t,29]);
m.push(['q','Data sent: Uniformity_Mask DONE',40],['q',' ',1]);
for(let i=0;i<14;i++)m.push(['q',i%4==2&&i<10?' ':'Write: Operability: 1st Unstable: [0]; Date: 00 (00)',i%4==2&&i<10?1:52]);
put('meter',m);
/* squeeze each label to the width of its slot, as the condensed form font does */
document.querySelectorAll('.fit').forEach(n=>{
 const s=document.createElement('span');s.append(...n.childNodes);n.append(s);
 const w=+n.dataset.w,full=s.getBoundingClientRect().width;
 n.style.width=w+'px';n.style.flex='none';
 if(full)s.style.transform='scaleX('+w/full+')';
});
</script>
</body>
</html>
